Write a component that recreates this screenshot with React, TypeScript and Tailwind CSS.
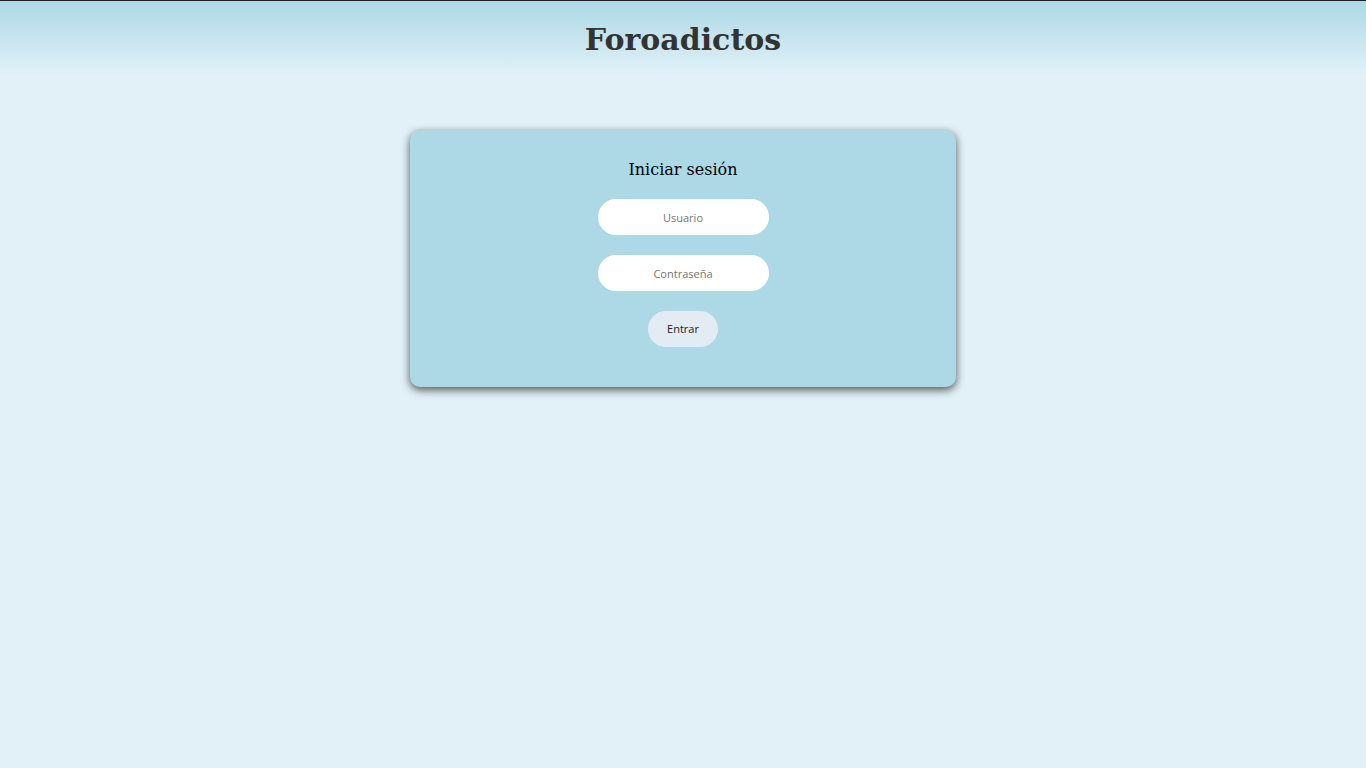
export default function App() {
  return (
    <div className="min-h-screen bg-[#e1f1f7] border-t border-[#222]">
      <header className="h-[75px] bg-gradient-to-b from-[#add8e6] to-[#e1f1f7] flex justify-center pt-[21px]">
        <h1 className="text-[30px] leading-[36px] font-bold text-[#333] font-['DejaVu_Serif',serif]">
          Foroadictos
        </h1>
      </header>

      <main className="flex justify-center pt-[54px]">
        <form
          className="w-[546px] bg-[#add8e6] rounded-[10px] shadow-[0_3px_9px_rgba(0,0,0,0.65)] flex flex-col items-center pt-[30px] pb-[40px]"
          onSubmit={(e) => e.preventDefault()}
        >
          <h2 className="text-[16px] leading-[20px] text-black font-['DejaVu_Serif',serif] mb-[19px]">
            Iniciar sesión
          </h2>
          <input
            type="text"
            placeholder="Usuario"
            className="w-[171px] h-[36px] rounded-full bg-white text-center text-[11px] font-['Open_Sans',sans-serif] placeholder:text-[#757575] outline-none mb-[20px]"
          />
          <input
            type="password"
            placeholder="Contraseña"
            className="w-[171px] h-[36px] rounded-full bg-white text-center text-[11px] font-['Open_Sans',sans-serif] placeholder:text-[#757575] outline-none mb-[20px]"
          />
          <button
            type="submit"
            className="w-[70px] h-[36px] rounded-full bg-[#e3ebf5] text-[11px] text-[#222] font-['Open_Sans',sans-serif]"
          >
            Entrar
          </button>
        </form>
      </main>
    </div>
  );
}
